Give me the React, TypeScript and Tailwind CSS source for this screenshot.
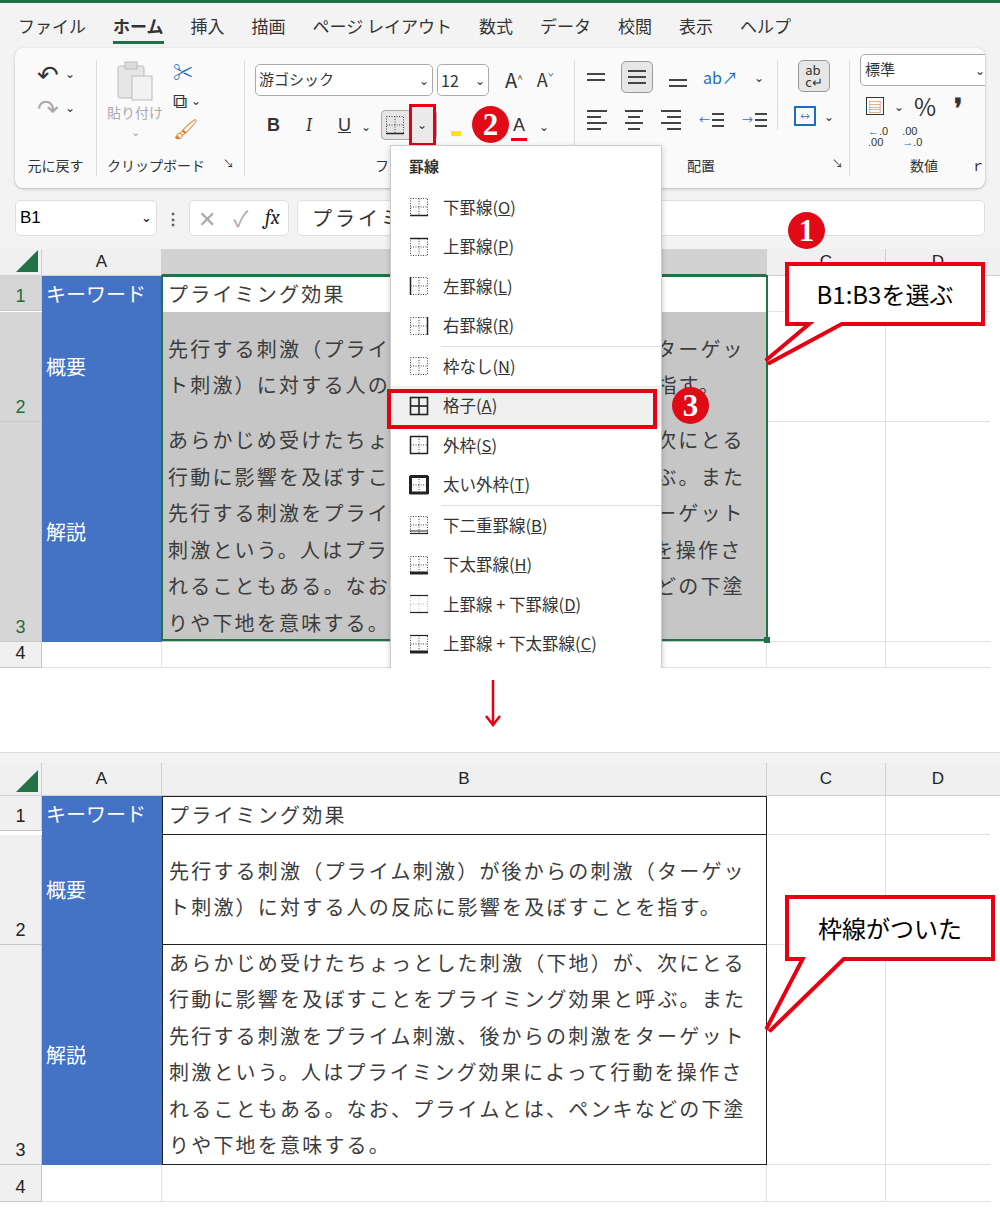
import React from "react";

const JP = { fontFamily: '"Noto Sans CJK JP", "Noto Sans", sans-serif' };

type BV = { t?: number; b?: number; l?: number; r?: number; grid?: boolean; dbl?: boolean; faint?: boolean };
function BorderIcon({ v }: { v: BV }) {
  const c = v.faint ? "#bbb" : "#444";
  return (
    <svg width="20" height="20" viewBox="0 0 20 20">
      {!v.grid && (
        <g stroke={c} strokeWidth="1" strokeDasharray="1 1.5" fill="none">
          <rect x="1.5" y="1.5" width="17" height="17" />
          <line x1="10" y1="1.5" x2="10" y2="18.5" />
          <line x1="1.5" y1="10" x2="18.5" y2="10" />
        </g>
      )}
      {v.grid && (
        <g stroke="#222" strokeWidth="1.6" fill="none">
          <rect x="1.5" y="1.5" width="17" height="17" />
          <line x1="10" y1="1.5" x2="10" y2="18.5" />
          <line x1="1.5" y1="10" x2="18.5" y2="10" />
        </g>
      )}
      {v.t ? <line x1="1" y1="1.5" x2="19" y2="1.5" stroke="#222" strokeWidth={v.t} /> : null}
      {v.b ? <line x1="1" y1={v.b > 2 ? 18 : 18.5} x2="19" y2={v.b > 2 ? 18 : 18.5} stroke="#222" strokeWidth={v.b} /> : null}
      {v.dbl ? <line x1="1" y1="16" x2="19" y2="16" stroke="#222" strokeWidth="1" /> : null}
      {v.l ? <line x1="1.5" y1="1" x2="1.5" y2="19" stroke="#222" strokeWidth={v.l} /> : null}
      {v.r ? <line x1="18.5" y1="1" x2="18.5" y2="19" stroke="#222" strokeWidth={v.r} /> : null}
    </svg>
  );
}

function Badge({ n, className }: { n: string; className: string }) {
  return (
    <div className={"absolute w-[37px] h-[37px] rounded-full bg-[#e10b17] text-white flex items-center justify-center text-[31px] font-bold leading-none " + className} style={{ fontFamily: '"Liberation Serif", serif' }}>
      {n}
    </div>
  );
}

function Callout({ className, text, tail }: { className: string; text: string; tail: string }) {
  return (
    <div className={"absolute " + className}>
      <svg className="absolute left-0 top-0 overflow-visible" width="10" height="10">
        <polygon points={tail} fill="white" stroke="#e60012" strokeWidth="8" strokeLinejoin="miter" />
      </svg>
      <div className="relative w-full h-full border-[4px] border-[#e60012] bg-white flex items-center justify-center text-[24px] text-black" style={JP}>
        {text}
      </div>
      <svg className="absolute left-0 top-0 overflow-visible" width="10" height="10">
        <polygon points={tail} fill="white" stroke="none" />
      </svg>
    </div>
  );
}

const row2 = ["先行する刺激（プライム刺激）が後からの刺激（ターゲッ", "ト刺激）に対する人の反応に影響を及ぼすことを指す。"];
const row3 = [
  "あらかじめ受けたちょっとした刺激（下地）が、次にとる",
  "行動に影響を及ぼすことをプライミング効果と呼ぶ。また",
  "先行する刺激をプライム刺激、後からの刺激をターゲット",
  "刺激という。人はプライミング効果によって行動を操作さ",
  "れることもある。なお、プライムとは、ペンキなどの下塗",
  "りや下地を意味する。",
];

function Sheet({ sel, headH, r4 }: { sel: boolean; headH: number; r4: number }) {
  const numCls = sel ? "bg-[#d6d6d6] text-[#1e6b3c]" : "bg-[#f0f0f0] text-[#222]";
  const bCell = sel ? "" : "border-l border-r border-[#222]";
  const txt = "text-[20px] tracking-[2.2px] text-[#3c3c3c] leading-[36.5px] pl-[6px] whitespace-nowrap overflow-hidden";
  const LS = { fontFamily: '"Liberation Sans", sans-serif' };
  return (
    <div className="relative grid grid-cols-[42px_120px_605px_119px_104px_10px] bg-white" style={JP}>
      <div className="bg-[#f0f0f0] border-r border-b border-[#d0d0d0] flex items-end justify-end p-[3px]" style={{ height: headH }}>
        <div className="w-0 h-0 border-l-[22px] border-l-transparent border-b-[22px] border-b-[#217346]" />
      </div>
      <div className="bg-[#f0f0f0] border-r border-b border-[#d0d0d0] flex items-center justify-center text-[17px] text-[#222]" style={LS}>A</div>
      <div className={(sel ? "bg-[#d2d2d2] border-b-2 border-b-[#217346]" : "bg-[#f0f0f0] border-b border-[#d0d0d0]") + " border-r border-[#d0d0d0] flex items-center justify-center text-[17px] text-[#222]"} style={LS}>{sel ? "" : "B"}</div>
      <div className="bg-[#f0f0f0] border-r border-b border-[#d0d0d0] flex items-center justify-center text-[17px] text-[#222]" style={LS}>C</div>
      <div className="bg-[#f0f0f0] border-b border-[#d0d0d0] flex items-center justify-center text-[17px] text-[#222]" style={LS}>D</div>
      <div className="bg-[#f0f0f0] border-b border-[#d0d0d0]" />
      {/* row1 */}
      <div className={numCls + " h-[35px] border-r border-b border-[#c8c8c8] flex items-end justify-center text-[18px]"} style={LS}>1</div>
      <div className="bg-[#4472c4] text-white text-[20px] leading-[35px] pl-[4px] whitespace-nowrap overflow-hidden">キーワード</div>
      <div className={"bg-white " + txt + " leading-[35px] " + (sel ? "" : "border-t border-b border-[#222] " + bCell)}>プライミング効果</div>
      <div className="border-b border-r border-[#e2e2e2]" />
      <div className="border-b border-[#e2e2e2]" />
      <div />
      {/* row2 */}
      <div className={numCls + " h-[110px] border-r border-b border-[#c8c8c8] flex items-end justify-center text-[18px]"} style={LS}>2</div>
      <div className="bg-[#4472c4] text-white text-[20px] pl-[4px] flex items-center">概要</div>
      <div className={(sel ? "bg-[#c6c6c6]" : "bg-white border-b border-[#222] " + bCell) + " " + txt + " flex flex-col justify-center"}>
        {row2.map((l) => <div key={l}>{l}</div>)}
      </div>
      <div className="border-b border-r border-[#e2e2e2]" />
      <div className="border-b border-[#e2e2e2]" />
      <div />
      {/* row3 */}
      <div className={numCls + " h-[220px] border-r border-b border-[#c8c8c8] flex items-end justify-center text-[18px]"} style={LS}>3</div>
      <div className="bg-[#4472c4] text-white text-[20px] pl-[4px] flex items-center">解説</div>
      <div className={(sel ? "bg-[#c6c6c6]" : "bg-white border-b border-[#222] " + bCell) + " " + txt}>
        {row3.map((l) => <div key={l}>{l}</div>)}
      </div>
      <div className="border-b border-r border-[#e2e2e2]" />
      <div className="border-b border-[#e2e2e2]" />
      <div />
      {/* row4 */}
      <div className="bg-[#f0f0f0] border-r border-b border-[#c8c8c8] flex items-end justify-center text-[18px] text-[#222]" style={{ height: r4, ...LS }}>4</div>
      <div className="border-r border-b border-[#e2e2e2]" />
      <div className="border-r border-b border-[#e2e2e2]" />
      <div className="border-r border-b border-[#e2e2e2]" />
      <div className="border-b border-[#e2e2e2]" />
      <div />
      {sel && (
        <div className="absolute left-[161px] top-[26px] w-[607px] h-[366px] border-2 border-[#217346] pointer-events-none">
          <div className="absolute -right-[4px] -bottom-[4px] w-[6px] h-[6px] bg-[#217346]" />
        </div>
      )}
    </div>
  );
}

const Chev = () => <span className="text-[12px] text-[#333]">⌄</span>;
function Lines({ w = [18, 18, 18], align = "start", color = "#444" }: { w?: number[]; align?: string; color?: string }) {
  return (
    <div className={"flex flex-col gap-[4px] " + (align === "end" ? "items-end" : align === "center" ? "items-center" : "items-start")}>
      {w.map((x, i) => <div key={i} className="h-[2px]" style={{ width: x, background: color }} />)}
    </div>
  );
}

const items: [string, BV, boolean?][] = [
  ["下罫線(O)", { b: 1.5 }],
  ["上罫線(P)", { t: 1.5 }],
  ["左罫線(L)", { l: 1.5 }],
  ["右罫線(R)", { r: 1.5 }, true],
  ["枠なし(N)", {}],
  ["格子(A)", { grid: true }],
  ["外枠(S)", { t: 1.5, b: 1.5, l: 1.5, r: 1.5 }],
  ["太い外枠(T)", { t: 3, b: 3, l: 3, r: 3 }, true],
  ["下二重罫線(B)", { b: 1.2, dbl: true }],
  ["下太罫線(H)", { b: 3 }],
  ["上罫線 + 下罫線(D)", { t: 1.2, b: 1.2, faint: true }],
  ["上罫線 + 下太罫線(C)", { t: 1.2, b: 3 }],
];

function Label({ s }: { s: string }) {
  const m = s.match(/^(.*)\((.)\)$/)!;
  return <span>{m[1]}(<span className="underline">{m[2]}</span>)</span>;
}

export default function App() {
  return (
    <div className="relative w-[1000px] h-[1207px] bg-white overflow-hidden" style={JP}>
      {/* TOP */}
      <div className="h-[668px] bg-[#f3f3f3] border-t-[3px] border-t-[#1e7145] flex flex-col relative overflow-hidden">
        <div className="h-[45px] flex items-center gap-[27px] pl-[18px] text-[17px] text-[#333]">
          <span>ファイル</span>
          <span className="font-bold relative">ホーム<span className="absolute left-0 right-0 -bottom-[6px] h-[3px] bg-[#1e7145]" /></span>
          <span>挿入</span><span>描画</span><span>ページ レイアウト</span><span>数式</span><span>データ</span><span>校閲</span><span>表示</span><span>ヘルプ</span>
        </div>
        <div className="mx-[15px] h-[142px] bg-[#fafafa] rounded-[8px] shadow-[0_1px_3px_rgba(0,0,0,0.25)] flex text-[#333]">
          {/* undo */}
          <div className="w-[82px] border-r border-[#ddd] my-[12px] flex flex-col items-center justify-between">
            <div className="flex flex-col gap-[8px]">
              <div className="flex items-center gap-[6px]"><span className="text-[26px] leading-none">↶</span><Chev /></div>
              <div className="flex items-center gap-[6px] text-[#aaa]"><span className="text-[26px] leading-none">↷</span><Chev /></div>
            </div>
            <span className="text-[14px]">元に戻す</span>
          </div>
          {/* clipboard */}
          <div className="w-[148px] border-r border-[#ddd] my-[12px] flex flex-col justify-between px-[10px]">
            <div className="flex gap-[10px]">
              <div className="flex flex-col items-center">
                <svg width="40" height="42" viewBox="0 0 40 42"><rect x="3" y="6" width="26" height="32" rx="2" fill="#e6e6e6" stroke="#bbb" /><rect x="10" y="2" width="12" height="7" fill="#ddd" stroke="#bbb" /><rect x="17" y="16" width="20" height="24" fill="#f2f2f2" stroke="#bbb" /></svg>
                <span className="text-[14px] text-[#aaa]">貼り付け</span>
                <span className="text-[11px] text-[#aaa]">⌄</span>
              </div>
              <div className="flex flex-col gap-[8px] pt-[2px]">
                <span className="text-[20px] leading-none text-[#1a6fc1]">✂</span>
                <div className="flex items-center gap-[4px]"><span className="text-[20px] leading-none">⧉</span><Chev /></div>
                <span className="text-[20px] leading-none text-[#e07b22]">🖌</span>
              </div>
            </div>
            <div className="flex justify-between text-[14px]"><span>クリップボード</span><span className="text-[11px]">↘</span></div>
          </div>
          {/* font */}
          <div className="w-[330px] border-r border-[#ddd] my-[12px] px-[10px] flex flex-col justify-between">
            <div className="flex items-center gap-[4px] mt-[4px]">
              <div className="w-[178px] h-[32px] border border-[#aaa] rounded-[5px] bg-white flex items-center justify-between px-[3px] text-[15px]"><span>游ゴシック</span><Chev /></div>
              <div className="w-[52px] h-[32px] border border-[#aaa] rounded-[5px] bg-white flex items-center justify-between px-[3px] text-[16px]"><span>12</span><Chev /></div>
              <span className="ml-[12px] text-[20px]">A<sup className="text-[10px]">^</sup></span>
              <span className="ml-[10px] text-[18px]">A<sup className="text-[10px] text-[#1a6fc1]">ˇ</sup></span>
            </div>
            <div className="flex items-center text-[18px]" style={{ fontFamily: '"Liberation Sans", sans-serif' }}>
              <span className="ml-[12px] font-bold">B</span>
              <span className="ml-[26px] italic font-serif">I</span>
              <span className="ml-[26px] underline">U</span>
              <span className="ml-[10px]"><Chev /></span>
              <div className="ml-[10px] h-[30px] w-[56px] border border-[#aaa] rounded-[4px] bg-[#e6e6e6] flex items-center">
                <div className="w-[28px] flex justify-center"><BorderIcon v={{ b: 1.5 }} /></div>
                <div className="relative w-[28px] h-[42px] border-[3px] border-[#e60012] flex items-center justify-center bg-[#eaeaea]"><Chev /></div>
              </div>
              <span className="ml-[14px] w-[10px] h-[5px] bg-[#ffe500] self-end mb-[4px]" />
              <span className="ml-[52px] relative text-[18px]">A<span className="absolute left-[-2px] right-[-2px] bottom-[-2px] h-[3px] bg-[#e60012]" /></span>
              <span className="ml-[14px]"><Chev /></span>
            </div>
            <span className="text-[14px] pl-[120px]">フォント</span>
          </div>
          {/* alignment */}
          <div className="w-[275px] border-r border-[#ddd] my-[12px] pl-[12px] pr-[6px] flex flex-col justify-between">
            <div className="flex">
              <div className="flex flex-col gap-[16px] pr-[10px] border-r border-[#ddd]">
                <div className="flex items-center gap-[16px] h-[34px]">
                  <Lines w={[18, 18]} />
                  <div className="w-[32px] h-[32px] border border-[#999] rounded-[5px] bg-[#e6e6e6] flex items-center justify-center"><Lines w={[18, 18, 18]} /></div>
                  <div className="mt-[12px]"><Lines w={[18, 18]} /></div>
                  <span className="text-[#1a6fc1] text-[16px]">ab↗</span><Chev />
                </div>
                <div className="flex items-center gap-[18px]">
                  <Lines w={[20, 14, 20, 14]} />
                  <Lines w={[18, 12, 18, 12]} align="center" />
                  <Lines w={[20, 14, 20, 14]} align="end" />
                  <div className="flex items-center gap-[2px]"><span className="text-[#1a6fc1] text-[11px]">←</span><Lines w={[12, 12, 12]} /></div>
                  <div className="flex items-center gap-[2px]"><span className="text-[#1a6fc1] text-[11px]">→</span><Lines w={[12, 12, 12]} /></div>
                </div>
              </div>
              <div className="flex flex-col items-center gap-[14px] pl-[16px]">
                <div className="w-[32px] h-[32px] border border-[#999] rounded-[5px] bg-[#e6e6e6] flex items-center justify-center text-[13px] leading-[12px] text-[#333]">ab<br />c↵</div>
                <div className="flex items-center gap-[8px]"><div className="w-[22px] h-[20px] border-2 border-[#1a6fc1] flex items-center justify-center text-[10px] text-[#1a6fc1]">↔</div><Chev /></div>
              </div>
            </div>
            <div className="flex justify-between text-[14px]"><span className="pl-[100px]">配置</span><span className="text-[11px]">↘</span></div>
          </div>
          {/* number */}
          <div className="flex-1 my-[6px] pl-[10px] flex flex-col justify-between overflow-hidden">
            <div className="w-[130px] h-[32px] border border-[#aaa] rounded-[5px] bg-white flex items-center justify-between px-[4px] text-[15px]"><span>標準</span><Chev /></div>
            <div className="flex items-center gap-[10px] pl-[6px]">
              <span className="text-[14px] text-[#e07b22] border border-[#333] px-[1px] leading-[16px]">▤</span><Chev />
              <span className="text-[24px] leading-none">%</span>
              <span className="text-[26px] font-bold leading-none ml-[8px]">❜</span>
            </div>
            <div className="flex gap-[14px] pl-[8px] text-[11px] leading-[11px]" style={{ fontFamily: '"Liberation Sans", sans-serif' }}>
              <span><span className="text-[#1a6fc1]">←</span>.0<br />.00</span>
              <span>.00<br /><span className="text-[#1a6fc1]">→</span>.0</span>
            </div>
            <div className="flex justify-between text-[14px] pb-[6px]"><span className="pl-[50px]">数値</span><span>ｒ</span></div>
          </div>
        </div>
        {/* formula bar */}
        <div className="mt-[12px] h-[36px] flex items-center gap-[8px] px-[15px]">
          <div className="w-[142px] h-full bg-white rounded-[5px] border border-[#ddd] flex items-center justify-between px-[4px] text-[17px]" style={{ fontFamily: '"Liberation Sans", sans-serif' }}><span>B1</span><span className="text-[13px]">⌄</span></div>
          <span className="text-[16px] font-bold text-[#555]">⋮</span>
          <div className="w-[100px] h-full bg-white rounded-[5px] border border-[#ddd] flex items-center justify-around text-[22px] text-[#aaa]"><span>✕</span><span>✓</span><span className="italic text-[#222] text-[20px] font-serif">fx</span></div>
          <div className="flex-1 h-full bg-white rounded-[5px] border border-[#ddd] flex items-center px-[14px] text-[20px] text-[#333] tracking-[3px]">プライミング効果</div>
        </div>
        <div className="mt-[13px]">
          <Sheet sel={true} headH={27} r4={26} />
        </div>
        {/* dropdown overlay */}
        <div className="absolute left-[390px] top-[142px] w-[272px] h-[540px] bg-white border border-[#ccc] shadow-[0_2px_6px_rgba(0,0,0,0.2)] text-[16.5px] text-[#333]">
          <div className="pl-[18px] pt-[9px] pb-[10px] font-bold text-[15px]">罫線</div>
          {items.map(([s, v, sep]) => (
            <React.Fragment key={s}>
              <div className={"h-[39.5px] flex items-center gap-[14px] pl-[18px] " + (s === "格子(A)" ? "bg-[#f0f0f0]" : "")}>
                <BorderIcon v={v} /><Label s={s} />
              </div>
              {sep && <div className="ml-[50px] h-[1px] bg-[#ddd]" />}
            </React.Fragment>
          ))}
          <div className="absolute left-[-4px] top-[243px] w-[270px] h-[40px] border-[4px] border-[#e60012] pointer-events-none" />
        </div>
      </div>
      {/* arrow */}
      <div className="h-[84px] flex justify-center pt-[12px]">
        <svg width="20" height="48" viewBox="0 0 20 48" className="ml-[-14px]"><line x1="10" y1="0" x2="10" y2="44" stroke="#e60012" strokeWidth="2.5" /><polyline points="3,36 10,45 17,36" fill="none" stroke="#e60012" strokeWidth="2.5" /></svg>
      </div>
      {/* BOTTOM */}
      <div className="border-t border-[#ddd] bg-[#f3f3f3] pt-[10px]">
        <Sheet sel={false} headH={33} r4={37} />
      </div>

      <Badge n="2" className="left-[472px] top-[106px]" />
      <Badge n="3" className="left-[672px] top-[387px]" />
      <Badge n="1" className="left-[788px] top-[212px]" />

      <Callout className="left-[785px] top-[262px] w-[200px] h-[64px]" text="B1:B3を選ぶ" tail="32,58 -18,100 60,58" />
      <Callout className="left-[785px] top-[895px] w-[210px] h-[66px]" text="枠線がついた" tail="22,60 -17,135 60,60" />
    </div>
  );
}
